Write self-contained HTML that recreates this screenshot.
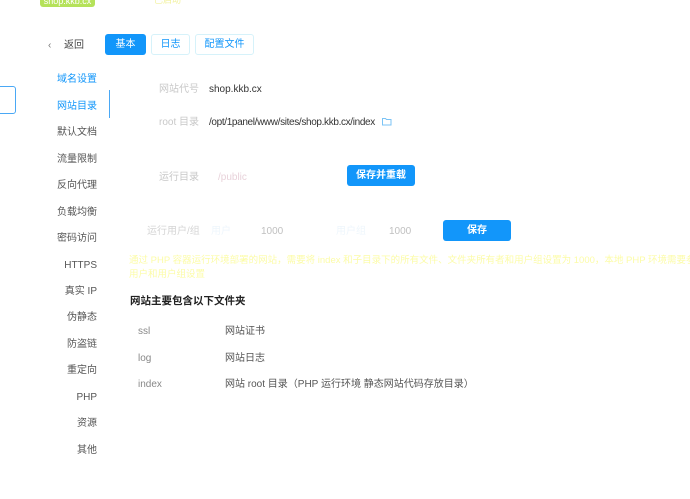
<!DOCTYPE html>
<html><head><meta charset="utf-8"><style>
body{margin:0;width:690px;height:499px;background:#fff;position:relative;overflow:hidden;font-family:"Liberation Sans","Noto Sans CJK SC",sans-serif;font-size:10px;color:#555}
.a{position:absolute;white-space:nowrap;line-height:12px;margin-top:2px}
.m{position:absolute;right:593px;width:80px;text-align:right;line-height:12px;color:#555;margin-top:2px}
.btn{position:absolute;border-radius:3px;text-align:center;font-size:10px;box-sizing:border-box}
.lab{color:#c8c8c8}
</style></head><body>
<div class="a" style="left:40px;top:-7px;width:55px;height:12px;background:#b5e25a;border-radius:3px;color:#fff;text-align:center;font-size:9px">shop.kkb.cx</div>
<div class="a" style="left:154px;top:-8px;color:#f2f2a0;font-size:9px">已启动</div>
<div class="a" style="left:48px;top:38px;color:#777">&lsaquo;</div>
<div class="a" style="left:64px;top:38px;color:#444">返回</div>
<div class="btn" style="left:105px;top:34px;width:41px;height:21px;background:#1296fa;color:#fff;line-height:21px">基本</div>
<div class="btn" style="left:151px;top:34px;width:39px;height:21px;border:1px solid #d6f2fa;color:#1296fa;line-height:19px">日志</div>
<div class="btn" style="left:195px;top:34px;width:59px;height:21px;border:1px solid #d6f2fa;color:#1296fa;line-height:19px">配置文件</div>
<div style="position:absolute;left:-3px;top:86px;width:17px;height:26px;border:1px solid #4aa8f5;border-radius:3px"></div>
<div style="position:absolute;left:109px;top:90px;width:1px;height:28px;background:#4aa8f5"></div>
<div class="m" style="top:72px;color:#1296fa">域名设置</div>
<div class="m" style="top:99px;color:#1296fa">网站目录</div>
<div class="m" style="top:125px">默认文档</div>
<div class="m" style="top:152px">流量限制</div>
<div class="m" style="top:178px">反向代理</div>
<div class="m" style="top:205px">负载均衡</div>
<div class="m" style="top:231px">密码访问</div>
<div class="m" style="top:258px">HTTPS</div>
<div class="m" style="top:284px">真实 IP</div>
<div class="m" style="top:310px">伪静态</div>
<div class="m" style="top:337px">防盗链</div>
<div class="m" style="top:363px">重定向</div>
<div class="m" style="top:390px">PHP</div>
<div class="m" style="top:416px">资源</div>
<div class="m" style="top:443px">其他</div>
<div class="a lab" style="left:159px;top:82px">网站代号</div>
<div class="a" style="left:209px;top:82px;color:#333">shop.kkb.cx</div>
<div class="a lab" style="left:159px;top:115px">root 目录</div>
<div class="a" style="left:209px;top:115px;color:#333;letter-spacing:-0.35px">/opt/1panel/www/sites/shop.kkb.cx/index</div>
<svg style="position:absolute;left:382px;top:117px" width="10" height="9" viewBox="0 0 10 9"><path d="M0.5 1.5h3l1 1h4.5v5.5h-8.5z" fill="none" stroke="#7bc3f5" stroke-width="1"/></svg>
<div class="a lab" style="left:159px;top:170px">运行目录</div>
<div class="a" style="left:218px;top:170px;color:#e8d2da">/public</div>
<div class="btn" style="left:347px;top:165px;width:68px;height:21px;background:#1296fa;color:#fff;line-height:21px;font-weight:bold">保存并重载</div>
<div class="a" style="left:147px;top:224px;color:#d5d5d5">运行用户/组</div>
<div class="a" style="left:211px;top:224px;color:#eef6fc">用户</div>
<div class="a" style="left:261px;top:224px;color:#c0c0c0">1000</div>
<div class="a" style="left:336px;top:224px;color:#eef6fc">用户组</div>
<div class="a" style="left:389px;top:224px;color:#c0c0c0">1000</div>
<div class="btn" style="left:443px;top:220px;width:68px;height:21px;background:#1296fa;color:#fff;line-height:21px;font-weight:bold">保存</div>
<div class="a" style="left:129px;top:253px;color:#fcfca8;font-size:9.5px">通过 PHP 容器运行环境部署的网站，需要将 index 和子目录下的所有文件、文件夹所有者和用户组设置为 1000，本地 PHP 环境需要参考</div>
<div class="a" style="left:129px;top:267px;color:#fcfca8;font-size:9.5px">用户和用户组设置</div>
<div class="a" style="left:130px;top:293px;color:#222;font-weight:bold;font-size:10.5px">网站主要包含以下文件夹</div>
<div class="a" style="left:138px;top:324px;color:#888">ssl</div>
<div class="a" style="left:225px;top:324px;color:#555">网站证书</div>
<div class="a" style="left:138px;top:351px;color:#888">log</div>
<div class="a" style="left:225px;top:351px;color:#555">网站日志</div>
<div class="a" style="left:138px;top:377px;color:#888">index</div>
<div class="a" style="left:225px;top:377px;color:#555">网站 root 目录（PHP 运行环境 静态网站代码存放目录）</div>
</body></html>
